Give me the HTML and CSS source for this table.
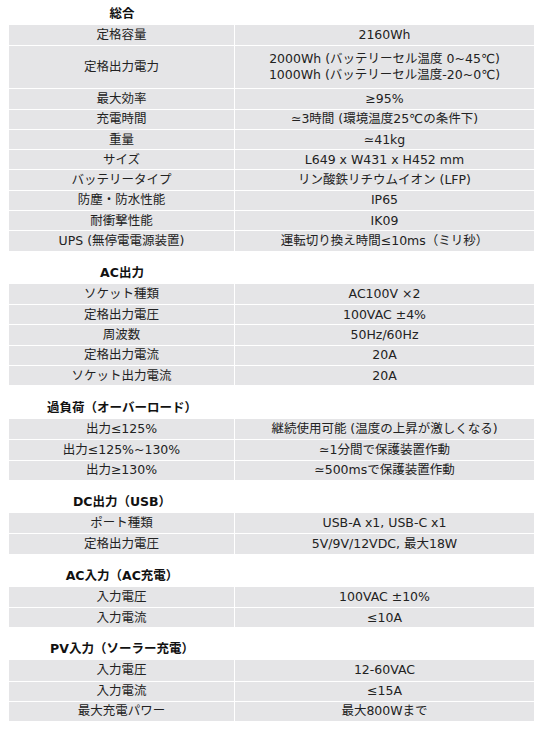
FILE: index.html
```html
<!DOCTYPE html>
<html lang="ja">
<head>
<meta charset="utf-8">
<title>仕様</title>
<link rel="stylesheet" href="styles.css">
</head>
<body>
<div class="page">
  <section class="sec first">
    <h2 class="title">総合</h2>
    <div class="spec">
      <div class="row"><div class="k">定格容量</div><div class="v">2160Wh</div></div>
      <div class="row tall"><div class="k">定格出力電力</div><div class="v multi"><span>2000Wh (バッテリーセル温度 0~45℃)</span><span>1000Wh (バッテリーセル温度-20~0℃)</span></div></div>
      <div class="row"><div class="k">最大効率</div><div class="v">≥95%</div></div>
      <div class="row"><div class="k">充電時間</div><div class="v">≃3時間 (環境温度25℃の条件下)</div></div>
      <div class="row"><div class="k">重量</div><div class="v">≃41kg</div></div>
      <div class="row"><div class="k">サイズ</div><div class="v">L649 x W431 x H452 mm</div></div>
      <div class="row"><div class="k">バッテリータイプ</div><div class="v">リン酸鉄リチウムイオン (LFP)</div></div>
      <div class="row"><div class="k">防塵・防水性能</div><div class="v">IP65</div></div>
      <div class="row"><div class="k">耐衝撃性能</div><div class="v">IK09</div></div>
      <div class="row"><div class="k">UPS (無停電電源装置)</div><div class="v">運転切り換え時間≤10ms（ミリ秒）</div></div>
    </div>
  </section>

  <section class="sec">
    <h2 class="title">AC出力</h2>
    <div class="spec">
      <div class="row"><div class="k">ソケット種類</div><div class="v">AC100V ×2</div></div>
      <div class="row"><div class="k">定格出力電圧</div><div class="v">100VAC ±4%</div></div>
      <div class="row"><div class="k">周波数</div><div class="v">50Hz/60Hz</div></div>
      <div class="row"><div class="k">定格出力電流</div><div class="v">20A</div></div>
      <div class="row"><div class="k">ソケット出力電流</div><div class="v">20A</div></div>
    </div>
  </section>

  <section class="sec wide">
    <h2 class="title">過負荷（オーバーロード）</h2>
    <div class="spec">
      <div class="row"><div class="k">出力≤125%</div><div class="v">継続使用可能 (温度の上昇が激しくなる)</div></div>
      <div class="row"><div class="k">出力≤125%~130%</div><div class="v">≃1分間で保護装置作動</div></div>
      <div class="row"><div class="k">出力≥130%</div><div class="v">≃500msで保護装置作動</div></div>
    </div>
  </section>

  <section class="sec">
    <h2 class="title">DC出力（USB）</h2>
    <div class="spec">
      <div class="row"><div class="k">ポート種類</div><div class="v">USB-A x1, USB-C x1</div></div>
      <div class="row"><div class="k">定格出力電圧</div><div class="v">5V/9V/12VDC, 最大18W</div></div>
    </div>
  </section>

  <section class="sec">
    <h2 class="title">AC入力（AC充電）</h2>
    <div class="spec">
      <div class="row"><div class="k">入力電圧</div><div class="v">100VAC ±10%</div></div>
      <div class="row"><div class="k">入力電流</div><div class="v">≤10A</div></div>
    </div>
  </section>

  <section class="sec">
    <h2 class="title">PV入力（ソーラー充電）</h2>
    <div class="spec">
      <div class="row"><div class="k">入力電圧</div><div class="v">12-60VAC</div></div>
      <div class="row"><div class="k">入力電流</div><div class="v">≤15A</div></div>
      <div class="row"><div class="k">最大充電パワー</div><div class="v">最大800Wまで</div></div>
    </div>
  </section>
</div>
</body>
</html>
```

FILE: styles.css
```css
* { box-sizing: border-box; }

html, body {
  margin: 0;
  padding: 0;
  background: #ffffff;
}

body {
  font-family: "DejaVu Sans", "Noto Sans CJK JP", sans-serif;
  font-size: 12.5px;
  color: #222222;
}

.page {
  padding: 0 12px 0 9px;
}

.sec {
  margin-top: 11px;
}

.sec.wide {
  margin-top: 12px;
}

.sec.first {
  margin-top: 0;
  padding-top: 3px;
}

.title {
  margin: 0;
  width: 226px;
  height: 22px;
  line-height: 22px;
  font-size: 12.5px;
  font-weight: bold;
  text-align: center;
  color: #111111;
}

.spec {
  display: flex;
  flex-direction: column;
  background: #e5e5e7;
  width: 525px;
}

.row {
  display: grid;
  grid-template-columns: 226px 1fr;
  height: 20.3px;
  border-top: 1px solid #ffffff;
}

.row:first-child {
  border-top: none;
}

.row.tall {
  height: 43px;
}

.k, .v {
  display: flex;
  align-items: center;
  justify-content: center;
  text-align: center;
  white-space: nowrap;
  line-height: 16px;
}

.k {
  border-right: 1px solid #ffffff;
}

.v.multi {
  flex-direction: column;
}
```
